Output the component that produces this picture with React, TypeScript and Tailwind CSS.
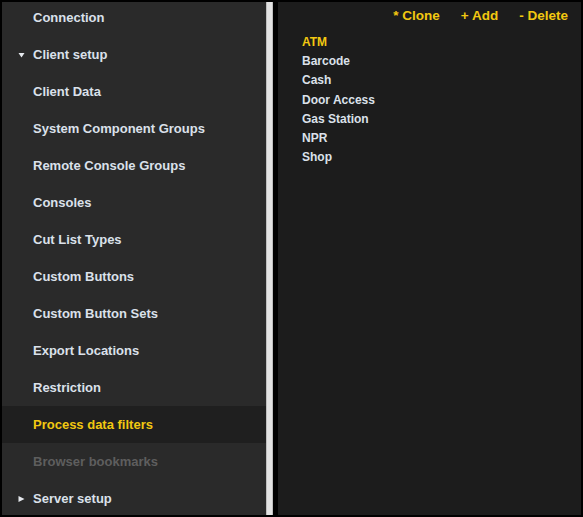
import React from 'react';

type NavItem = {
    label: string;
    caret?: 'down' | 'right';
    active?: boolean;
    disabled?: boolean;
};

const navItems: NavItem[] = [
    { label: 'Connection' },
    { label: 'Client setup', caret: 'down' },
    { label: 'Client Data' },
    { label: 'System Component Groups' },
    { label: 'Remote Console Groups' },
    { label: 'Consoles' },
    { label: 'Cut List Types' },
    { label: 'Custom Buttons' },
    { label: 'Custom Button Sets' },
    { label: 'Export Locations' },
    { label: 'Restriction' },
    { label: 'Process data filters', active: true },
    { label: 'Browser bookmarks', disabled: true },
    { label: 'Server setup', caret: 'right' },
];

const filters = ['ATM', 'Barcode', 'Cash', 'Door Access', 'Gas Station', 'NPR', 'Shop'];

const Caret: React.FC<{ dir: 'down' | 'right' }> = ({ dir }) => (
    <svg width="7" height="7" viewBox="0 0 7 7" className="absolute left-[16px] top-1/2 -translate-y-1/2">
        {dir === 'down'
            ? <polygon points="0.5,1.5 6.5,1.5 3.5,6" fill="#e6e9ee" />
            : <polygon points="0.5,0.5 6.5,3.5 0.5,6.5" fill="#e6e9ee" />}
    </svg>
);

export default function App() {
    return (
        <div
            className="w-[583px] h-[517px] bg-black p-[2px] flex overflow-hidden"
            style={{ fontFamily: '"Liberation Sans", Arial, sans-serif' }}
        >
            {/* sidebar */}
            <div className="w-[264px] h-full bg-[#2a2a2a] overflow-hidden">
                <ul className="-mt-[3px]">
                    {navItems.map((item) => (
                        <li
                            key={item.label}
                            className={`relative h-[37px] flex items-center pl-[31px] text-[13px] font-bold ${
                                item.active
                                    ? 'bg-[#1f1f1f] text-[#f2c811]'
                                    : item.disabled
                                        ? 'text-[#5e5e5e]'
                                        : 'text-[#dbe1ea]'
                            }`}
                        >
                            {item.caret && <Caret dir={item.caret} />}
                            {item.label}
                        </li>
                    ))}
                </ul>
            </div>

            {/* scrollbar */}
            <div className="w-[7px] h-full bg-[#e2e2e2] border-x border-[#bdbdbd]" />
            <div className="w-[5px] h-full bg-black" />

            {/* content */}
            <div className="flex-1 h-full bg-[#1c1c1c]">
                <div className="flex justify-end gap-[21px] pr-[13px] pt-[6px] text-[13.5px] font-bold text-[#f2c811] leading-[15px]">
                    <span>* Clone</span>
                    <span>+ Add</span>
                    <span>- Delete</span>
                </div>
                <ul className="pl-[24px] pt-[10px]">
                    {filters.map((f, i) => (
                        <li
                            key={f}
                            className={`text-[12px] font-bold leading-[19.2px] ${i === 0 ? 'text-[#f2c811]' : 'text-[#dbe1ea]'}`}
                        >
                            {f}
                        </li>
                    ))}
                </ul>
            </div>
        </div>
    );
}
